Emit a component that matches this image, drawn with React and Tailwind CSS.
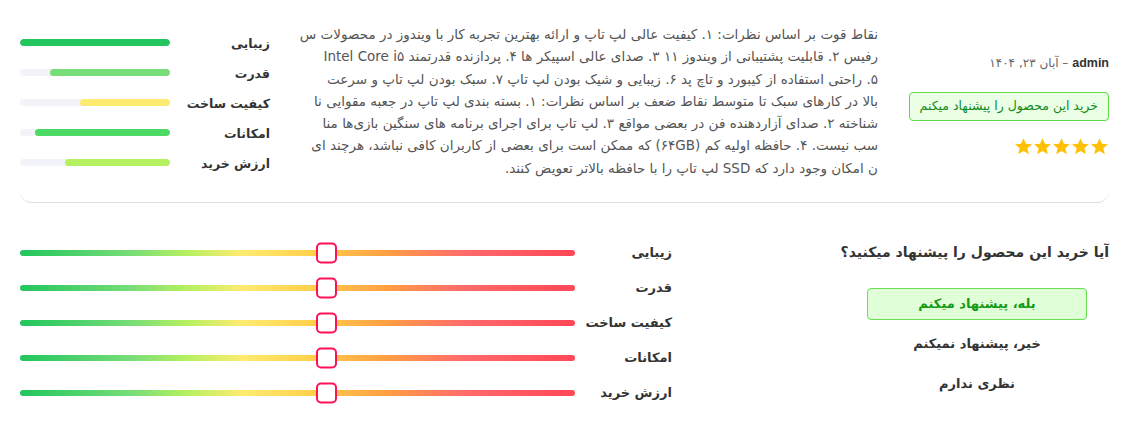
const lines = [
  "نقاط قوت بر اساس نظرات: ۱. کیفیت عالی لپ تاپ و ارائه بهترین تجربه کار با ویندوز در محصولات س",
  "رفیس ۲. قابلیت پشتیبانی از ویندوز ۱۱ ۳. صدای عالی اسپیکر ها ۴. پردازنده قدرتمند Intel Core i۵",
  "۵. راحتی استفاده از کیبورد و تاچ پد ۶. زیبایی و شیک بودن لپ تاپ ۷. سبک بودن لپ تاپ و سرعت",
  "بالا در کارهای سبک تا متوسط نقاط ضعف بر اساس نظرات: ۱. بسته بندی لپ تاپ در جعبه مقوایی نا",
  "شناخته ۲. صدای آزاردهنده فن در بعضی مواقع ۳. لپ تاپ برای اجرای برنامه های سنگین بازی‌ها منا",
  "سب نیست. ۴. حافظه اولیه کم (۶۴GB) که ممکن است برای بعضی از کاربران کافی نباشد، هرچند ای",
  "ن امکان وجود دارد که SSD لپ تاپ را با حافظه بالاتر تعویض کنند.",
];

const scores = [
  { label: "زیبایی", value: 100, color: "bg-[#22c55e]" },
  { label: "قدرت", value: 80, color: "bg-[#77dd77]" },
  { label: "کیفیت ساخت", value: 60, color: "bg-[#fdeb71]" },
  { label: "امکانات", value: 90, color: "bg-[#4cd964]" },
  { label: "ارزش خرید", value: 70, color: "bg-[#b5f060]" },
];

function Star() {
  return (
    <svg width="19" height="19" viewBox="0 0 24 24">
      <path
        d="M12 1.5l3.1 7.1 7.6.6-5.8 5 1.8 7.5L12 17.8l-6.7 3.9 1.8-7.5-5.8-5 7.6-.6z"
        fill="#ffc107"
      />
    </svg>
  );
}

function Slider() {
  return (
    <div className="relative h-[6px] w-[555px] rounded-full bg-[linear-gradient(to_right,#22c55e_0%,#77dd77_20%,#b5f060_30%,#fdeb71_40%,#ffd24d_52%,#ff9f43_66%,#ff6b6b_80%,#ff4757_100%)]">
      <div className="absolute left-[296px] top-1/2 h-[21px] w-[21px] -translate-y-1/2 rounded-[5px] border-2 border-[#ff1158] bg-white" />
    </div>
  );
}

export default function App() {
  return (
    <div dir="rtl" className="bg-white px-5 font-['DejaVu_Sans',sans-serif] text-[#333]">
      <section className="flex items-center rounded-xl border-b border-[#dedede] py-[23px]">
        <div className="flex w-[231px] shrink-0 flex-col items-start self-start pt-[31px]">
          <p className="h-[18px] text-[12px] leading-[18px] text-[#666]">
            <span className="font-['Liberation_Sans',sans-serif] text-[12.5px] font-bold text-[#333]">admin</span> – آبان ۲۳, ۱۴۰۴
          </p>
          <button className="mt-[20px] h-[29px] rounded-[4px] border border-[#5fdc44] bg-[#eaffe6] px-[10px] text-[12.5px] text-[#12891a]">
            خرید این محصول را پیشنهاد میکنم
          </button>
          <div className="mt-[16px] flex">
            {[0, 1, 2, 3, 4].map((i) => (
              <Star key={i} />
            ))}
          </div>
        </div>

        <div className="min-w-0 flex-1 pl-[30px] text-[13.5px] leading-[22.3px] text-[#555]">
          {lines.map((line, i) => (
            <p key={i} className="overflow-hidden whitespace-nowrap">
              {line}
            </p>
          ))}
        </div>

        <div className="flex w-[250px] shrink-0 flex-col gap-[17px] pt-[3px]">
          {scores.map((s) => (
            <div key={s.label} className="flex h-[13px] items-center">
              <span className="w-[100px] pt-[4px] text-[12.5px] font-bold">{s.label}</span>
              <div className="h-[7px] w-[150px] overflow-hidden rounded-full bg-[#f3f3fa]">
                <div className={`h-full rounded-full ${s.color}`} style={{ width: `${s.value}%` }} />
              </div>
            </div>
          ))}
        </div>
      </section>

      <section className="mt-[32px] flex justify-between">
        <div className="flex w-[264px] shrink-0 flex-col items-center">
          <h3 className="flex h-[35px] w-full items-center whitespace-nowrap text-[14px] font-bold">
            آیا خرید این محصول را پیشنهاد میکنید؟
          </h3>
          <div className="mt-[18px] flex w-full flex-col items-center gap-[8px] text-[13px] font-bold">
            <div className="flex h-[32px] w-[220px] items-center justify-center rounded-[4px] border border-[#66e050] bg-[#e0ffd8] text-[#169a16]">
              بله، پیشنهاد میکنم
            </div>
            <div className="flex h-[32px] items-center justify-center">خیر، پیشنهاد نمیکنم</div>
            <div className="flex h-[32px] items-center justify-center">نظری ندارم</div>
          </div>
        </div>

        <div className="flex w-[652px] flex-col">
          {scores.map((s) => (
            <div key={s.label} className="flex h-[35px] items-center">
              <span className="w-[97px] text-[13px] font-bold">{s.label}</span>
              <Slider />
            </div>
          ))}
        </div>
      </section>
    </div>
  );
}
